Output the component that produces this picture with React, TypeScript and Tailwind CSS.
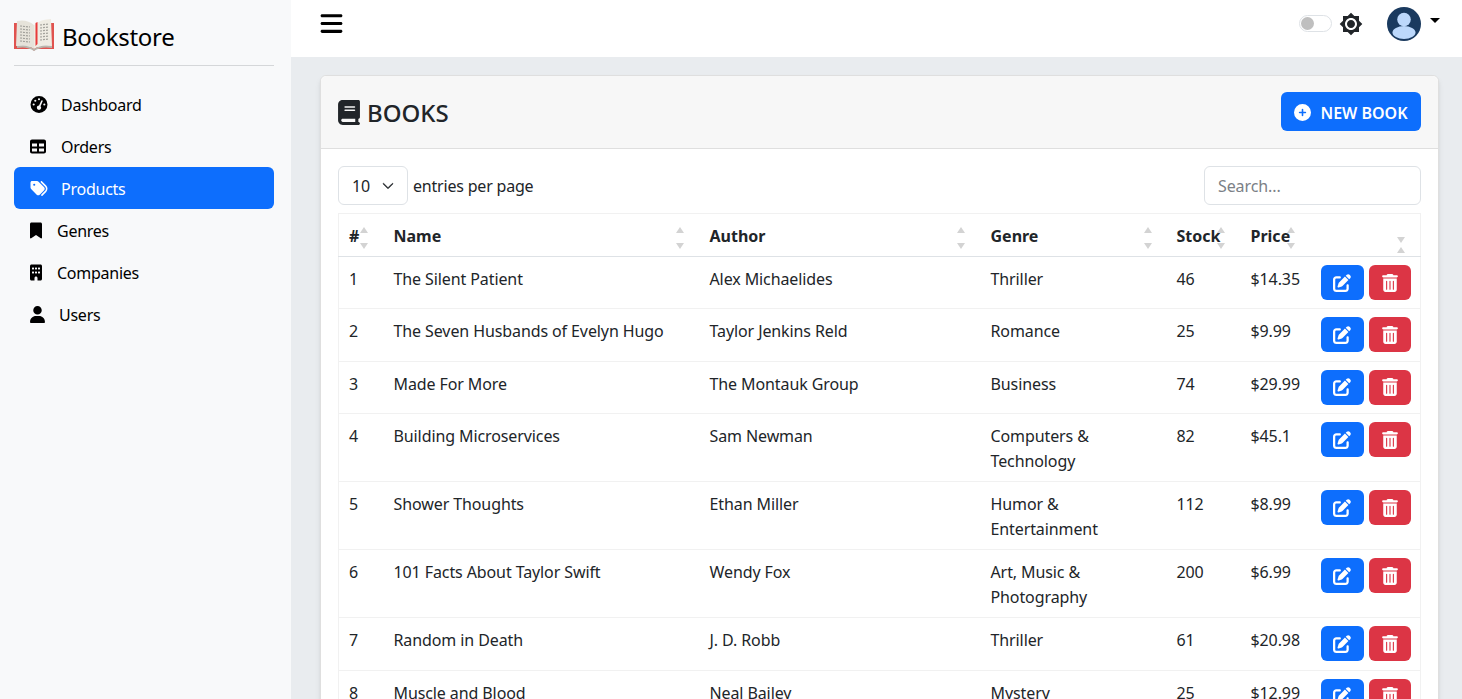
import React from "react";
import { FaGaugeHigh, FaTable, FaTags, FaBookmark, FaBuilding, FaUser, FaBook, FaCirclePlus, FaPenToSquare, FaTrashCan, FaBars } from "react-icons/fa6";
import { MdBrightness7 } from "react-icons/md";
import { BsChevronDown } from "react-icons/bs";

const font = { fontFamily: '"Noto Sans", sans-serif' };

const nav = [
  { label: "Dashboard", Icon: FaGaugeHigh, w: "w-[18px]", gap: "ml-[13px]" },
  { label: "Orders", Icon: FaTable, w: "w-[16px]", gap: "ml-[15px]" },
  { label: "Products", Icon: FaTags, w: "w-[18px]", gap: "ml-[13px]", active: true },
  { label: "Genres", Icon: FaBookmark, w: "w-[12px]", gap: "ml-[15px]" },
  { label: "Companies", Icon: FaBuilding, w: "w-[12px]", gap: "ml-[15px]" },
  { label: "Users", Icon: FaUser, w: "w-[15px]", gap: "ml-[14px]" },
];

const rows = [
  ["1", "The Silent Patient", "Alex Michaelides", "Thriller", "46", "$14.35"],
  ["2", "The Seven Husbands of Evelyn Hugo", "Taylor Jenkins Reld", "Romance", "25", "$9.99"],
  ["3", "Made For More", "The Montauk Group", "Business", "74", "$29.99"],
  ["4", "Building Microservices", "Sam Newman", "Computers & Technology", "82", "$45.1"],
  ["5", "Shower Thoughts", "Ethan Miller", "Humor & Entertainment", "112", "$8.99"],
  ["6", "101 Facts About Taylor Swift", "Wendy Fox", "Art, Music & Photography", "200", "$6.99"],
  ["7", "Random in Death", "J. D. Robb", "Thriller", "61", "$20.98"],
  ["8", "Muscle and Blood", "Neal Bailey", "Mystery", "25", "$12.99"],
];

function Sort({ x }: { x: string }) {
  return (
    <span className={`absolute ${x} top-[13px] flex flex-col gap-[10px]`}>
      <span className="w-0 h-0 border-x-[4.5px] border-x-transparent border-b-[6px] border-b-[#d3d3d3]" />
      <span className="w-0 h-0 border-x-[4.5px] border-x-transparent border-t-[6px] border-t-[#d3d3d3]" />
    </span>
  );
}

function Logo() {
  return (
    <svg viewBox="0 0 42 36" className="w-[42px] h-[36px] shrink-0">
      <path d="M1 6 L1 32 L19 32 Q21 35 23 32 L41 32 L41 6 L38 6 L38 30 L4 30 L4 6 Z" fill="#e0534f" />
      <path d="M21 8 Q14 2 4 4 L3 29 Q14 27 21 32 Z" fill="#e6e3da" />
      <path d="M21 8 Q28 2 38 2 L39 29 Q28 27 21 32 Z" fill="#efece3" />
      <path d="M4 29 Q14 27 21 32 Q28 27 39 29 L39 31 Q28 29 21 34 Q14 29 4 31 Z" fill="#b9b6ad" />
      <g stroke="#a3a29c" strokeWidth="1.2" strokeDasharray="2 1">
        <path d="M7 9 L17 10 M7 12 L17 13 M7 15 L17 16 M7 18 L17 19 M7 21 L17 22 M7 24 L17 25" />
        <path d="M27 8 L36 7 M27 11 L36 10 M27 14 L36 13 M27 17 L36 16 M27 20 L36 19 M27 23 L36 22" />
      </g>
      <path d="M22.5 6 L24.5 5 L24.5 27 L22.5 29 Z" fill="#e83a3a" />
    </svg>
  );
}

export default function App() {
  return (
    <div className="flex h-screen overflow-hidden bg-white text-[#212529] tracking-[-0.1px]" style={font}>
      <aside className="w-[291px] shrink-0 bg-[#f8f9fa] pl-[14px] pr-[17px]">
        <div className="h-[66px] flex items-center border-b border-[#d5d7d9] text-black">
          <span className="-ml-[1px] mt-[4px]"><Logo /></span>
          <span className="text-[24px] ml-[7px] mt-[8px] tracking-[-0.3px]">Bookstore</span>
        </div>
        <nav className="mt-[17px] flex flex-col tracking-[-0.25px]">
          {nav.map(({ label, Icon, w, gap, active }) => (
            <div key={label} className={`h-[42px] flex items-center pl-4 pt-[1px] rounded-md text-[16px] ${active ? "bg-[#0d6efd] text-white" : "text-black"}`}>
              <Icon className={`h-[17px] ${w} shrink-0`} />
              <span className={gap}>{label}</span>
            </div>
          ))}
        </nav>
      </aside>
      <div className="flex-1 min-w-0 flex flex-col bg-[#e9ecef]">
        <header className="h-[57px] shrink-0 bg-white flex items-center pl-[28px] pr-[22px] pb-[10px]">
          <FaBars className="text-[25px] text-black" />
          <div className="ml-auto flex items-center">
            <span className="w-[33px] h-[17px] rounded-full border border-[#dee2e6] bg-white flex items-center pl-[1px]">
              <span className="w-[13px] h-[13px] rounded-full bg-[#bfbfbf]" />
            </span>
            <MdBrightness7 className="text-[24px] text-[#212529] ml-[7px]" />
            <svg viewBox="0 0 34 34" className="w-[34px] h-[34px] ml-[24px]">
              <circle cx="17" cy="17" r="17" fill="#1a3a5f" />
              <circle cx="17" cy="12.5" r="6.8" fill="#bcd8fb" />
              <ellipse cx="17" cy="25.5" rx="11.5" ry="6.5" fill="#bcd8fb" />
            </svg>
            <span className="ml-[9px] mb-[6px] w-0 h-0 border-x-[5px] border-x-transparent border-t-[5px] border-t-black" />
          </div>
        </header>
        <main className="flex-1 min-h-0 pl-[29px] pr-[23px] pt-[18px]">
          <section className="bg-white rounded-md border border-[#dfdfdf] shadow-md">
            <div className="h-[73px] bg-[#f7f7f7] border-b border-[#dfdfdf] flex items-center justify-between pl-[17px] pr-[17px] rounded-t-md">
              <h1 className="flex items-center text-[24px] font-medium text-[#212529] pt-[1px] tracking-normal">
                <FaBook className="h-[25px] w-[22px] mr-[7px]" />
                BOOKS
              </h1>
              <button className="h-[39px] w-[140px] mb-[2px] pt-[3px] bg-[#0d6efd] text-white rounded-md flex items-center justify-center text-[16px] font-semibold tracking-normal">
                <FaCirclePlus className="mr-[9px] text-[17px]" />
                NEW BOOK
              </button>
            </div>
            <div className="pl-[17px] pr-[17px] pt-[17px]">
              <div className="flex items-center justify-between h-[39px]">
                <div className="flex items-center">
                  <div className="w-[70px] h-[39px] border border-[#dee2e6] rounded-md flex items-center pl-[13px] text-[16px]">
                    10
                    <BsChevronDown className="ml-[12px] text-[12px]" stroke="currentColor" strokeWidth={1} />
                  </div>
                  <span className="ml-[5px] text-[16px] tracking-[-0.2px]">entries per page</span>
                </div>
                <div className="w-[217px] h-[39px] border border-[#dee2e6] rounded-md flex items-center px-[13px] text-[16px] text-[#7b8086]">Search...</div>
              </div>
              <table className="mt-[8px] w-full table-fixed border-collapse border-x border-[#f1f1f1] text-[16px]">
                <colgroup>
                  <col className="w-[55px]" />
                  <col className="w-[316px]" />
                  <col className="w-[281px]" />
                  <col className="w-[186px]" />
                  <col className="w-[74px]" />
                  <col className="w-[70px]" />
                  <col />
                </colgroup>
                <thead>
                  <tr className="h-[43px] border-t border-t-[#f1f1f1] border-b border-b-[#dee2e6] text-left">
                    {["#", "Name", "Author", "Genre", "Stock", "Price", ""].map((h, i) => (
                      <th key={i} className="p-0 pt-[2px] font-bold relative tracking-normal">
                        <span className={i === 0 ? "pl-[10px]" : ""}>{h}</span>
                        {i < 6 && <Sort x={["left-[21px]", "right-[26px]", "right-[26px]", "right-[25px]", "right-[26px]", "right-[26px]"][i]} />}
                        {i === 6 && (
                          <span className="absolute right-[15px] top-[23px] flex flex-col gap-[4px]">
                            <span className="w-0 h-0 border-x-[4.5px] border-x-transparent border-t-[6px] border-t-[#d3d3d3]" />
                            <span className="w-0 h-0 border-x-[4.5px] border-x-transparent border-b-[6px] border-b-[#d3d3d3]" />
                          </span>
                        )}
                      </th>
                    ))}
                  </tr>
                </thead>
                <tbody>
                  {rows.map((r) => (
                    <tr key={r[0]} className="h-[52.4px] border-b border-[#f1f1f1] align-top">
                      <td className="p-0 pt-[10px] pl-[10px] leading-[25px]">{r[0]}</td>
                      <td className="p-0 pt-[10px] leading-[25px]">{r[1]}</td>
                      <td className="p-0 pt-[10px] leading-[25px]">{r[2]}</td>
                      <td className="p-0 pt-[10px] pb-[7px] leading-[25px] pr-[60px]">{r[3]}</td>
                      <td className="p-0 pt-[10px] leading-[25px]">{r[4]}</td>
                      <td className="p-0 pt-[10px] leading-[25px]">{r[5]}</td>
                      <td className="p-0 pt-[8px]">
                        <div className="flex gap-[5px]">
                          <button className="w-[43px] h-[35px] rounded-md bg-[#0d6efd] text-white flex items-center justify-center"><FaPenToSquare className="text-[18px]" /></button>
                          <button className="w-[42px] h-[35px] rounded-md bg-[#dc3545] text-white flex items-center justify-center"><FaTrashCan className="text-[18px]" /></button>
                        </div>
                      </td>
                    </tr>
                  ))}
                </tbody>
              </table>
            </div>
          </section>
        </main>
      </div>
    </div>
  );
}
